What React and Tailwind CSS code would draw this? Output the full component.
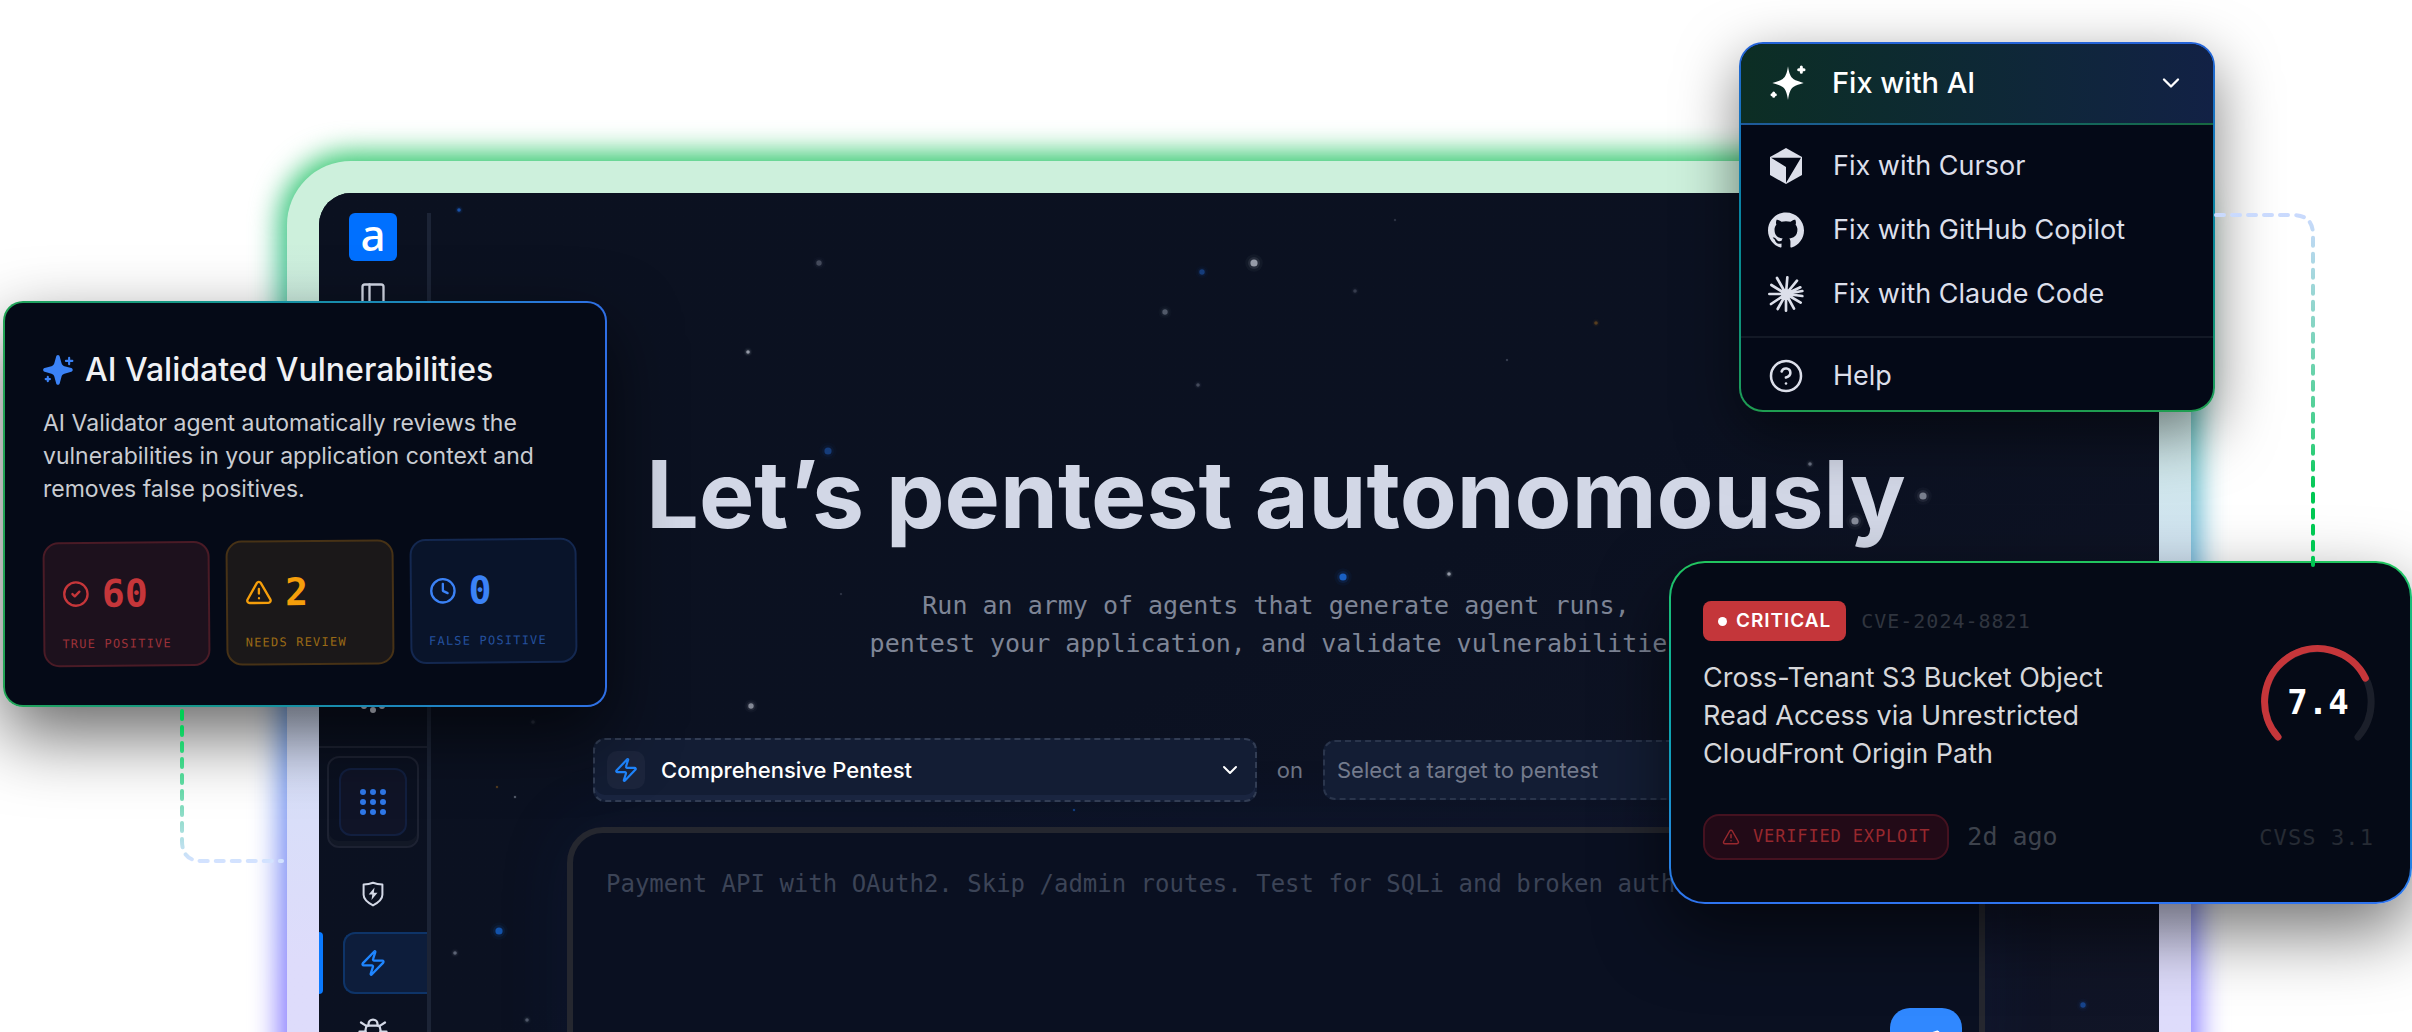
import React, { useState } from "react";
import {
  ChevronDown,
  CircleCheck,
  CircleHelp,
  Clock,
  PanelLeft,
  Send,
  TriangleAlert,
  Zap,
} from "lucide-react";
import { SiGithub } from "react-icons/si";

const STARS = [
  { x: 459, y: 210, r: 2, color: "#1d5fc4", opacity: 0.8 },
  { x: 819, y: 263, r: 3, color: "#8b93a5", opacity: 0.4 },
  { x: 1254, y: 263, r: 4, color: "#c5cad6", opacity: 0.7 },
  { x: 1202, y: 272, r: 3, color: "#1d5fc4", opacity: 0.5 },
  { x: 1165, y: 312, r: 3, color: "#8b93a5", opacity: 0.5 },
  { x: 1355, y: 291, r: 2, color: "#8b93a5", opacity: 0.3 },
  { x: 1395, y: 220, r: 1, color: "#8b93a5", opacity: 0.3 },
  { x: 1596, y: 323, r: 2, color: "#b7791f", opacity: 0.4 },
  { x: 1507, y: 360, r: 1, color: "#8b93a5", opacity: 0.4 },
  { x: 748, y: 352, r: 2, color: "#c5cad6", opacity: 0.7 },
  { x: 1198, y: 385, r: 2, color: "#8b93a5", opacity: 0.4 },
  { x: 828, y: 451, r: 4, color: "#1d5fc4", opacity: 0.5 },
  { x: 1810, y: 464, r: 2, color: "#8b93a5", opacity: 0.7 },
  { x: 1923, y: 496, r: 4, color: "#a0a5b3", opacity: 0.7 },
  { x: 1855, y: 521, r: 4, color: "#a0a5b3", opacity: 0.8 },
  { x: 1343, y: 577, r: 4, color: "#1d6fe4", opacity: 0.8 },
  { x: 1449, y: 574, r: 2, color: "#c5cad6", opacity: 0.7 },
  { x: 841, y: 594, r: 1, color: "#8b93a5", opacity: 0.3 },
  { x: 751, y: 706, r: 3, color: "#c5cad6", opacity: 0.6 },
  { x: 533, y: 722, r: 2, color: "#8b93a5", opacity: 0.2 },
  { x: 497, y: 787, r: 1, color: "#b7791f", opacity: 0.5 },
  { x: 515, y: 797, r: 1, color: "#8b93a5", opacity: 0.7 },
  { x: 1074, y: 810, r: 1, color: "#1d5fc4", opacity: 0.7 },
  { x: 499, y: 931, r: 4, color: "#1560c8", opacity: 0.8 },
  { x: 455, y: 953, r: 2, color: "#8b93a5", opacity: 0.6 },
  { x: 527, y: 1020, r: 2, color: "#8b93a5", opacity: 0.5 },
  { x: 2083, y: 1005, r: 3, color: "#1d5fc4", opacity: 0.6 },
];

const STATS = [
  {
    label: "TRUE POSITIVE",
    value: "60",
    icon: CircleCheck,
    box: "border-[#4a1b26] bg-[#1d111d] text-[#c6363a]",
    caption: "text-[#9c3139]",
  },
  {
    label: "NEEDS REVIEW",
    value: "2",
    icon: TriangleAlert,
    box: "border-[#473216] bg-[#1b1819] text-[#f59e0b]",
    caption: "text-[#9a6a15]",
  },
  {
    label: "FALSE POSITIVE",
    value: "0",
    icon: Clock,
    box: "border-[#142850] bg-[#09142a] text-[#3b82f6]",
    caption: "text-[#24509d]",
  },
];

const Starfield = () => (
  <svg className="pointer-events-none absolute inset-0 h-full w-full" aria-hidden="true">
    <g transform="translate(-319 -193)">
      {STARS.map((s) => (
        <g key={`${s.x}-${s.y}`} fill={s.color}>
          <circle cx={s.x} cy={s.y} r={s.r * 2.2} opacity={s.opacity * 0.06} />
          <circle cx={s.x} cy={s.y} r={s.r * 1.5} opacity={s.opacity * 0.15} />
          <circle cx={s.x} cy={s.y} r={s.r * 0.9} opacity={s.opacity} />
        </g>
      ))}
    </g>
  </svg>
);

const SparkleIcon = ({ className }) => (
  <svg viewBox="0 0 30 30" className={className} fill="currentColor" aria-hidden="true">
    <path d="M14 1c1 0 1.500.700 1.700 1.500l1.700 6.200c.4 1.400 1.300 2.300 2.700 2.700l6.400 1.800c1.800.5 1.800 2.900 0 3.400l-6.400 1.800c-1.400.4-2.300 1.300-2.700 2.700l-1.700 6.400c-.5 1.900-2.900 1.900-3.400 0l-1.700-6.400c-.4-1.400-1.300-2.300-2.700-2.700l-6.400-1.800c-1.800-.5-1.800-2.900 0-3.400l6.400-1.800c1.400-.4 2.300-1.300 2.700-2.700l1.700-6.200C12.500 1.700 13 1 14 1Z" />
    <path
      d="M24.500 3.500v6M21.500 6.500h6M4.500 21.500v4M2.500 23.500h4"
      stroke="currentColor"
      strokeWidth="2"
      strokeLinecap="round"
    />
  </svg>
);

const SharpSparkleIcon = ({ className }) => (
  <svg viewBox="0 0 108 108" className={className} fill="currentColor" aria-hidden="true">
    <path d="M54 4c3 22 8 32 16 38 8 5 18 8 31 12-13 4-23 7-31 12-8 6-13 17-16 39-3-22-8-33-16-39-8-5-18-8-31-12 13-4 23-7 31-12 8-6 13-16 16-38Z" />
    <path
      d="M94 6v16M86 14h16M11 84v10M6 89h10"
      stroke="currentColor"
      strokeWidth="9"
      strokeLinecap="round"
    />
  </svg>
);

const CursorIcon = () => (
  <svg viewBox="0 0 108 108" className="size-9" aria-hidden="true">
    <path d="M54 0 102 27v54L54 108 6 81V27Z" fill="#dcdfea" />
    <path d="M9 29h90L54 105V57Z" fill="#040917" />
  </svg>
);

const ClaudeIcon = () => (
  <svg
    viewBox="0 0 108 108"
    className="size-9"
    stroke="currentColor"
    strokeWidth="8"
    strokeLinecap="round"
    aria-hidden="true"
  >
    <circle cx="54" cy="54" r="15" fill="currentColor" stroke="none" />
    <path d="M54 54 27 6M54 54 58 4M54 54 87 14M54 54 97 34M54 54 103 45M54 54 103 60M54 54 98 80M54 54 78 98M54 54 54 104M54 54 29 99M54 54 9 84M54 54 4 54M54 54 10 27" />
  </svg>
);

const ShieldZapIcon = () => (
  <svg viewBox="0 0 28 28" className="size-7" fill="none" aria-hidden="true">
    <path
      d="M14 2.800c3 1.200 6 1.700 9.400 1.800v10.200c0 4.600-4 7.800-9.400 10.600-5.400-2.800-9.400-6-9.400-10.600V4.600C8 4.500 11 4 14 2.800Z"
      stroke="currentColor"
      strokeWidth="2"
      strokeLinejoin="round"
    />
    <path d="M15.500 7.500 9.700 14.600h3.600L12.500 20l6-7.300h-3.700Z" fill="currentColor" />
  </svg>
);

const BugIcon = () => (
  <svg
    viewBox="0 0 24 24"
    className="size-9"
    fill="none"
    stroke="currentColor"
    strokeWidth="1.5"
    strokeLinecap="round"
    strokeLinejoin="round"
    aria-hidden="true"
  >
    <path d="M9 9V8a3 3 0 0 1 6 0v1" />
    <path d="M8 9h8a6 6 0 0 1 1 3v3a5 5 0 0 1-10 0v-3a6 6 0 0 1 1-3" />
    <path d="M3 13h4M17 13h4M12 20v-6M4 19l3.350-2M20 19l-3.350-2M4 7l3.750 2.400M20 7l-3.750 2.400" />
  </svg>
);

const NodesIcon = () => (
  <svg viewBox="0 0 28 28" className="size-7" fill="currentColor" aria-hidden="true">
    <circle cx="14" cy="4" r="3" />
    <circle cx="5" cy="8" r="3" />
    <circle cx="23" cy="8" r="3" />
    <circle cx="14" cy="14" r="3" />
    <circle cx="5" cy="20" r="3" />
    <circle cx="23" cy="20" r="3" />
    <circle cx="14" cy="24" r="3" />
  </svg>
);

const DotGridIcon = () => (
  <svg viewBox="0 0 28 28" className="size-7" fill="currentColor" aria-hidden="true">
    {[4, 14, 24].map((y) =>
      [4, 14, 24].map((x) => <circle key={`${x}-${y}`} cx={x} cy={y} r="3" />)
    )}
  </svg>
);

const Sidebar = () => (
  <aside className="relative flex w-[112px] shrink-0 flex-col">
    <div className="absolute top-5 right-0 bottom-0 w-1 bg-[#1c2436]" />
    <div className="mr-1 flex flex-col items-center pt-5 text-[#d3d8e6]">
      <a
        href="#inicio"
        className="flex size-12 items-center justify-center rounded-md bg-[#0070ff] pb-[6px] font-['Noto_Sans',sans-serif] text-[44px] leading-[42px] font-medium text-white"
      >
        a
      </a>
      <button type="button" aria-label="Toggle sidebar" className="mt-5">
        <PanelLeft className="size-7" strokeWidth={2} />
      </button>
      <button type="button" aria-label="Assets" className="mt-[377px]">
        <NodesIcon />
      </button>
      <div className="mt-8 h-[2px] w-full bg-[#1d2232]" />
      <div className="mt-2 rounded-xl border-2 border-[#1d2232] p-[10px] shadow-[inset_0_-5px_0_#121826]">
        <button
          type="button"
          aria-label="Apps"
          className="flex size-[68px] items-center justify-center rounded-xl border-2 border-[#121f3f] bg-[#101427] text-[#2f78e8]"
        >
          <DotGridIcon />
        </button>
      </div>
      <button type="button" aria-label="Protection" className="mt-8">
        <ShieldZapIcon />
      </button>
      <div className="mt-6 flex w-full justify-between">
        <div className="h-[62px] w-1 rounded-r-sm bg-[#0a7aff]" />
        <button
          type="button"
          aria-label="Pentests"
          className="flex h-[62px] w-[84px] items-center rounded-l-xl border-2 border-r-0 border-[#0e3468] bg-[#0d1d3b] pl-[14px] text-[#1f86ff]"
        >
          <Zap className="size-7" strokeWidth={2} />
        </button>
      </div>
      <button type="button" aria-label="Issues" className="mt-[18px]">
        <BugIcon />
      </button>
    </div>
  </aside>
);

const Workspace = () => {
  const [prompt, setPrompt] = useState("");

  return (
    <main className="relative flex flex-1 flex-col items-center pt-[253px] pr-[38px]">
      <h1 className="text-center font-['Inter',sans-serif] text-[93px] leading-[96px] font-bold whitespace-nowrap text-[#d2d7e6]">
        Let’s pentest autonomously
      </h1>
      <p className="mt-[45px] text-center font-['DejaVu_Sans_Mono',monospace] text-[25px] leading-[38px] text-[#7e8596]">
        Run an army of agents that generate agent runs,
        <br />
        pentest your application, and validate vulnerabilities
      </p>

      <div className="mt-[75px] w-full max-w-[1418px]">
        <div className="flex items-center gap-5 px-[26px] font-['Inter',sans-serif] text-[22px]">
          <div className="relative flex h-16 flex-1 items-center rounded-xl border-2 border-dashed border-[#323d54] bg-[#131d34] pl-3 shadow-[inset_0_-5px_0_#1a2540]">
            <span className="mr-4 flex size-[38px] items-center justify-center rounded-[10px] bg-[#1c253c] text-[#1f86ff]">
              <Zap className="size-[26px]" strokeWidth={2} />
            </span>
            <select
              aria-label="Pentest type"
              className="h-full flex-1 appearance-none bg-transparent font-medium text-white outline-none"
            >
              <option>Comprehensive Pentest</option>
            </select>
            <ChevronDown className="pointer-events-none absolute right-[13px] size-6 text-white" strokeWidth={2} />
          </div>
          <span className="text-[#6d7485]">on</span>
          <select
            aria-label="Target"
            className="h-[60px] w-[636px] appearance-none rounded-xl border-2 border-dashed border-[#2a354c] bg-[#131d34] pl-3 text-[#747b8d] outline-none"
          >
            <option>Select a target to pentest</option>
          </select>
        </div>

        <div className="mt-[25px] flex h-[284px] flex-col rounded-[36px] border-[6px] border-[#25272f] bg-[#0a1021] pt-[33px] pr-[17px] pl-[33px] shadow-[0_0_70px_rgba(20,50,120,0.15)]">
          <textarea
            aria-label="Prompt"
            value={prompt}
            onChange={(e) => setPrompt(e.target.value)}
            placeholder="Payment API with OAuth2. Skip /admin routes. Test for SQLi and broken auth."
            className="h-[142px] w-full shrink-0 resize-none bg-transparent font-['DejaVu_Sans_Mono',monospace] text-[24px] leading-9 text-white outline-none placeholder:text-[#3c4457]"
          />
          <button
            type="button"
            aria-label="Send"
            className="flex size-[72px] shrink-0 items-center justify-center self-end rounded-[20px] bg-[#3088ff] text-white"
          >
            <Send className="size-7" strokeWidth={3} />
          </button>
        </div>
      </div>
    </main>
  );
};

const ValidatedCard = () => (
  <section className="absolute top-[301px] left-[3px] w-[604px] rounded-[20px] bg-linear-to-r from-[#22a355] to-[#2f6fe6] p-[2px] font-['Inter',sans-serif] shadow-[0_28px_70px_rgba(0,0,0,0.6)]">
    <div className="h-[402px] rounded-[18px] bg-[#050a17] px-[38px] pt-[47px]">
      <div className="flex items-center gap-[10px]">
        <SparkleIcon className="size-8 text-[#3b82f6]" />
        <h2 className="text-[32px] leading-10 font-medium text-[#f0f1f4]">
          AI Validated Vulnerabilities
        </h2>
      </div>
      <p className="mt-[17px] text-[23px] leading-[33px] font-normal text-[#c9ccd2]">
        AI Validator agent automatically reviews the
        <br />
        vulnerabilities in your application context and
        <br />
        removes false positives.
      </p>
      <div className="mt-[34px] -mr-[10px] grid -rotate-[0.5deg] grid-cols-3 gap-4">
        {STATS.map((stat) => (
          <div
            key={stat.label}
            className={`h-[125px] rounded-2xl border-2 pt-7 pl-[17px] font-['DejaVu_Sans_Mono',monospace] ${stat.box}`}
          >
            <div className="flex items-center gap-3">
              <stat.icon className="size-7" strokeWidth={2} />
              <span className="text-[38px] leading-[44px] font-bold">{stat.value}</span>
            </div>
            <p className={`mt-5 text-[12px] leading-4 tracking-widest ${stat.caption}`}>
              {stat.label}
            </p>
          </div>
        ))}
      </div>
    </div>
  </section>
);

const MenuItem = ({ icon, children }) => (
  <button type="button" className="flex h-16 w-full items-center gap-[29px] pl-[27px] text-left">
    {icon}
    {children}
  </button>
);

const FixMenu = () => (
  <nav className="absolute top-[42px] right-[197px] w-[476px] rounded-3xl bg-linear-to-b from-[#2563d8] to-[#1f9d50] p-[2px] font-['Inter',sans-serif] text-[27px] text-[#dcdfea] shadow-[0_20px_60px_rgba(0,0,0,0.5)]">
    <div className="overflow-hidden rounded-[22px] bg-[#040917]">
      <button
        type="button"
        className="flex h-[79px] w-full items-center bg-linear-to-r from-[#0c2e24] to-[#122145] pb-[2px] pl-[29px] text-[29px] font-medium text-white"
      >
        <SharpSparkleIcon className="size-9" />
        <span className="ml-[26px] flex-1 text-left">Fix with AI</span>
        <ChevronDown className="mr-7 size-7" strokeWidth={2} />
      </button>
      <div className="h-[2px] bg-linear-to-r from-[#1f5a9c] to-[#17683f]" />
      <div className="pt-[9px] pb-[10px]">
        <MenuItem icon={<CursorIcon />}>Fix with Cursor</MenuItem>
        <MenuItem icon={<SiGithub className="size-9" />}>Fix with GitHub Copilot</MenuItem>
        <MenuItem icon={<ClaudeIcon />}>Fix with Claude Code</MenuItem>
      </div>
      <div className="h-[2px] bg-[#131926]" />
      <div className="pt-[6px] pb-[2px]">
        <MenuItem icon={<CircleHelp className="size-9" strokeWidth={1.7} />}>Help</MenuItem>
      </div>
    </div>
  </nav>
);

const FindingCard = () => (
  <section className="absolute top-[561px] right-0 w-[743px] rounded-[36px] bg-linear-to-b from-[#22c55e] to-[#2f74f0] p-[2px] font-['Inter',sans-serif] shadow-[0_28px_70px_rgba(0,0,0,0.55)]">
    <div className="h-[339px] rounded-[34px] bg-[#050a16] px-8 pt-[38px]">
      <div className="flex justify-between">
        <div>
          <div className="flex items-center gap-[15px]">
            <span className="flex h-10 items-center gap-[9px] rounded-lg bg-[#c4363a] px-[15px] text-[19px] font-semibold tracking-wider text-white">
              <span className="size-[9px] rounded-full bg-white" />
              CRITICAL
            </span>
            <span className="font-['DejaVu_Sans_Mono',monospace] text-[20px] tracking-wider text-[#30353f]">
              CVE-2024-8821
            </span>
          </div>
          <h3 className="mt-[18px] text-[27px] leading-[38px] font-normal text-[#d6d7da]">
            Cross-Tenant S3 Bucket Object
            <br />
            Read Access via Unrestricted
            <br />
            CloudFront Origin Path
          </h3>
        </div>
        <div className="relative mt-[43px] mr-[2px] flex size-[116px] items-center justify-center">
          <svg viewBox="0 0 116 116" className="absolute inset-0 size-full" fill="none" strokeWidth="7" strokeLinecap="round" aria-hidden="true">
            <path d="M18 93A53.150 53.150 0 1 1 98 93" stroke="#1b1f2a" />
            <path d="M18 93A53.150 53.150 0 1 1 105.400 34.200" stroke="#c6363a" />
          </svg>
          <span className="relative font-['DejaVu_Sans_Mono',monospace] text-[34px] font-bold text-white">
            7.4
          </span>
        </div>
      </div>
      <div className="mt-[41px] flex items-center font-['DejaVu_Sans_Mono',monospace]">
        <span className="flex h-[46px] items-center gap-[13px] rounded-2xl border-2 border-[#451220] bg-[#220a17] px-[17px] text-[17px] tracking-wider text-[#97282e]">
          <TriangleAlert className="size-[18px]" strokeWidth={2} />
          VERIFIED EXPLOIT
        </span>
        <span className="ml-[18px] text-[25px] text-[#3d424c]">2d ago</span>
        <span className="mr-1 ml-auto text-[22px] tracking-wider text-[#262b34]">CVSS 3.1</span>
      </div>
    </div>
  </section>
);

// Dashed lines that tie the floating cards to the window
const Connectors = () => (
  <>
    <svg className="absolute top-[707px] left-[178px] h-[160px] w-[110px]" fill="none" aria-hidden="true">
      <defs>
        <linearGradient id="left-line" gradientUnits="userSpaceOnUse" x1="0" y1="0" x2="0" y2="154">
          <stop offset="0.1" stopColor="#00cf55" />
          <stop offset="1" stopColor="#d3e2ff" />
        </linearGradient>
      </defs>
      <path
        d="M4 4V134Q4 154 24 154H104"
        stroke="url(#left-line)"
        strokeWidth="4"
        strokeLinecap="round"
        strokeDasharray="8 8"
      />
    </svg>
    <svg className="absolute top-[211px] right-[90px] h-[360px] w-[112px]" fill="none" aria-hidden="true">
      <defs>
        <linearGradient id="right-line" gradientUnits="userSpaceOnUse" x1="0" y1="0" x2="0" y2="350">
          <stop offset="0" stopColor="#ccdaff" />
          <stop offset="0.65" stopColor="#40cf88" />
          <stop offset="0.8" stopColor="#00c853" />
        </linearGradient>
      </defs>
      <path
        d="M6 4H83Q103 4 103 24V354"
        stroke="url(#right-line)"
        strokeWidth="4"
        strokeLinecap="round"
        strokeDasharray="8 8"
      />
    </svg>
  </>
);

const App = () => {
  return (
    <div className="relative h-screen overflow-hidden bg-white">
      <div className="pt-[161px] pr-[221px] pl-[287px]">
        <div className="relative">
          <div className="absolute -inset-2 rounded-[72px] bg-linear-to-b from-[#2cc767] via-[#5aa5e0] via-[460px] to-[#8478ff] to-[850px] blur-[14px]" />
          <div className="relative rounded-[64px] bg-linear-to-b from-[#cdf0dc] from-[80px] via-[#d2e1f6] via-[460px] to-[#dedcfb] to-[800px] p-8">
            <div className="relative flex overflow-hidden rounded-[32px] bg-[#0b1120]">
              <div className="absolute inset-0 bg-linear-to-br from-[#0b1120] via-[#0b1121] to-[#111527]" />
              <Starfield />
              <Sidebar />
              <Workspace />
            </div>
          </div>
        </div>
      </div>

      <ValidatedCard />
      <FixMenu />
      <FindingCard />
      <Connectors />
    </div>
  );
};

export default App;
